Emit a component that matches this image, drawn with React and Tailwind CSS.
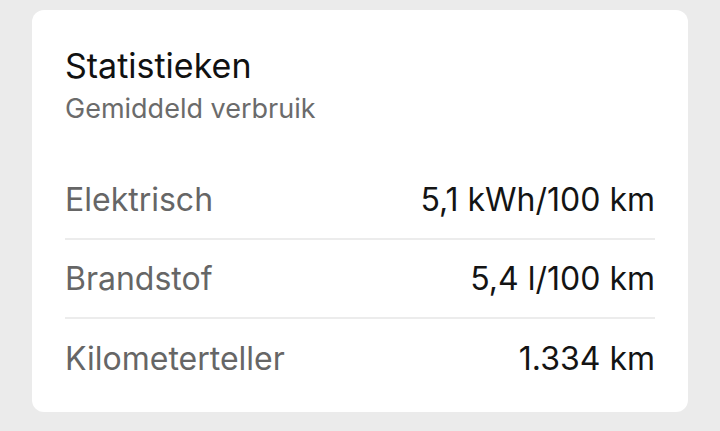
const rows = [
  { label: 'Elektrisch', value: '5,1 kWh/100 km' },
  { label: 'Brandstof', value: '5,4 l/100 km' },
  { label: 'Kilometerteller', value: '1.334 km' },
]

export default function App() {
  return (
    <div className="w-[720px] h-[431px] bg-[#ebebeb] pt-[10px] pl-[32px] font-['Inter',sans-serif]">
      <div className="w-[656px] h-[402px] bg-white rounded-[12px] px-[33px] pt-[35px]">
        <h2 className="text-[34px] leading-[41px] text-[#111111] font-normal">Statistieken</h2>
        <p className="text-[27px] leading-[32px] text-[#6b6b6b] mt-[7px]">Gemiddeld verbruik</p>
        <div className="mt-[36px]">
          {rows.map((row, i) => (
            <div
              key={row.label}
              className={`flex items-center justify-between h-[79px] ${i < rows.length - 1 ? 'border-b-2 border-[#ececec]' : ''}`}
            >
              <span className="text-[32px] leading-[40px] text-[#666666]">{row.label}</span>
              <span className="text-[32px] leading-[40px] text-[#141414]">{row.value}</span>
            </div>
          ))}
        </div>
      </div>
    </div>
  )
}
